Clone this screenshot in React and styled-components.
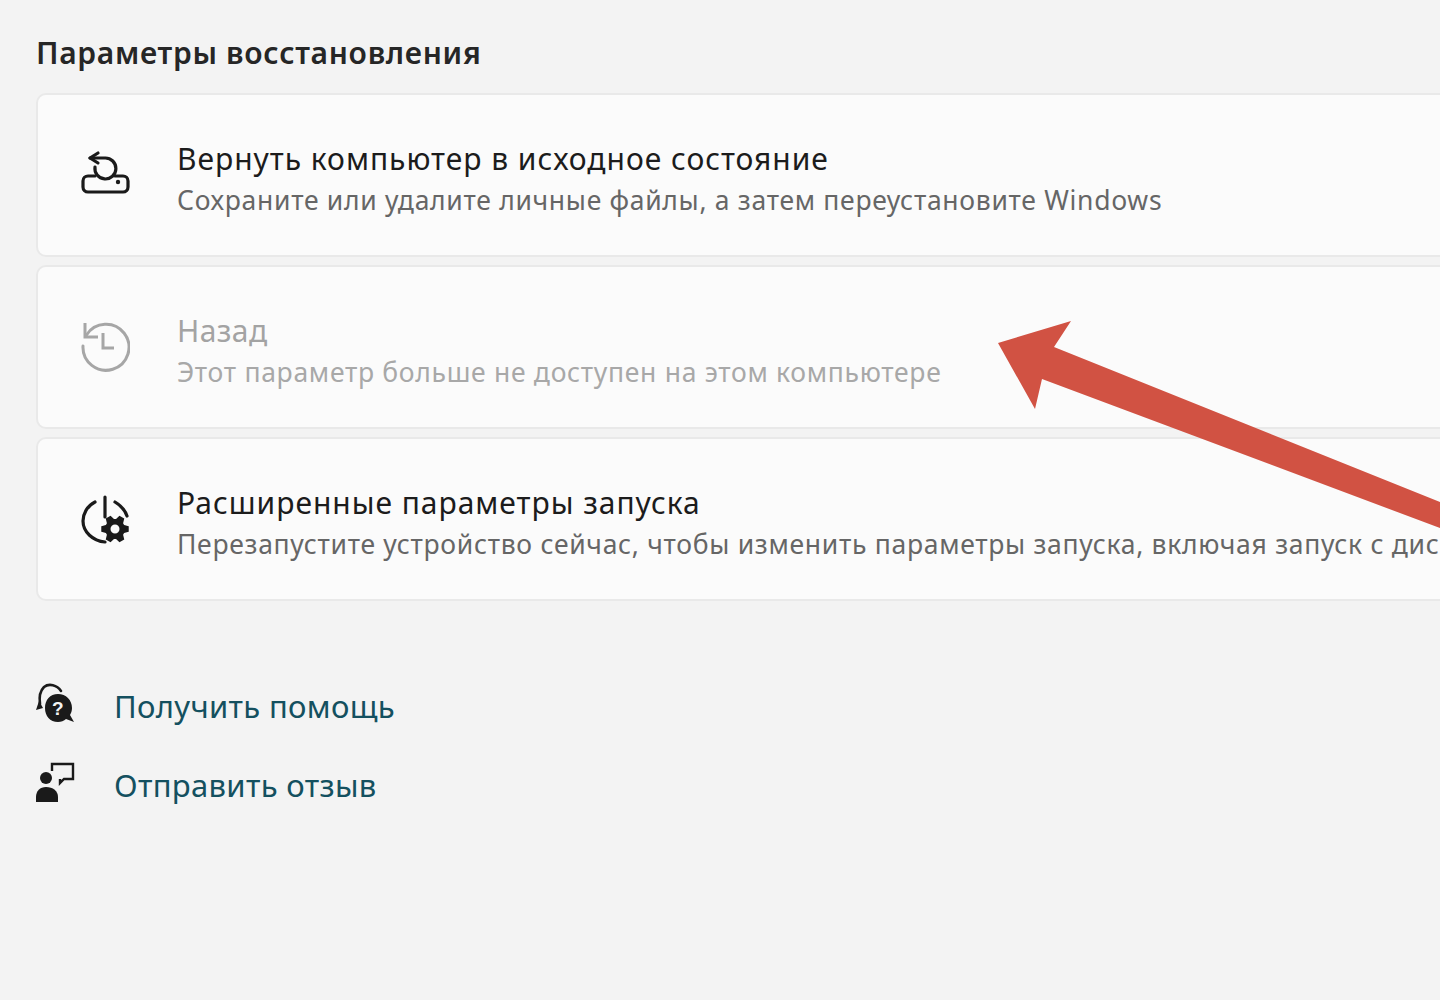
import React from 'react'
import styled, { createGlobalStyle } from 'styled-components'

const GlobalStyle = createGlobalStyle`
  html, body {
    margin: 0;
    padding: 0;
    background: #f3f3f3;
    overflow: hidden;
  }
`

const Page = styled.div`
  position: relative;
  width: 1440px;
  height: 1000px;
  overflow: hidden;
  box-sizing: border-box;
  padding: 32px 0 0 36px;
  background: #f3f3f3;
  font-family: 'Noto Sans', 'Open Sans', sans-serif;
`

const SectionTitle = styled.h2`
  margin: 0 0 19px;
  height: 42px;
  line-height: 42px;
  font-size: 30px;
  font-weight: 600;
  letter-spacing: 0.7px;
  color: #262626;
`

const CardList = styled.div`
  display: flex;
  flex-direction: column;
  gap: 8px;
  width: 1500px;
`

const Card = styled.div`
  display: flex;
  align-items: center;
  height: 164px;
  box-sizing: border-box;
  padding-left: 36px;
  background: #fbfbfb;
  border: 2px solid #e9e9e9;
  border-radius: 10px;
`

const IconSlot = styled.div`
  flex: none;
  width: 56px;
  height: 56px;
  margin-right: 47px;
  color: ${props => (props.$disabled ? '#a6a6a6' : '#1a1a1a')};

  svg {
    display: block;
  }
`

const CardText = styled.div`
  display: flex;
  flex-direction: column;
  gap: 2px;
  padding-top: 8px;
  white-space: nowrap;
`

const CardTitle = styled.div`
  font-size: 30px;
  line-height: 40px;
  letter-spacing: ${props => (props.$disabled ? '0.4px' : '0.97px')};
  color: ${props => (props.$disabled ? '#a3a3a3' : '#1c1c1c')};
`

const CardSub = styled.div`
  font-size: 26.5px;
  line-height: 38px;
  letter-spacing: 0.7px;
  color: ${props => (props.$disabled ? '#a8a8a8' : '#666666')};
`

const Links = styled.div`
  display: flex;
  flex-direction: column;
  gap: 31px;
  margin-top: 81px;
`

const LinkRow = styled.a`
  display: flex;
  align-items: center;
  height: 48px;
  color: #14505f;
  font-size: 31px;
  letter-spacing: 0.33px;
  text-decoration: none;
`

const LinkIcon = styled.span`
  flex: none;
  width: 40px;
  height: 48px;
  margin-right: 38px;
  color: #1a1a1a;

  svg {
    display: block;
  }
`

const Arrow = styled.svg`
  position: absolute;
  left: 0;
  top: 0;
  pointer-events: none;
`

// six toothed gear, teeth on the horizontal axis
const gearPath = (cx, cy, outer, inner, hole) => {
  const pts = []
  for (let i = 0; i < 6; i++) {
    const a = (i * 60 * Math.PI) / 180
    const spread = [[-0.42, inner], [-0.2, outer], [0.2, outer], [0.42, inner]]
    spread.forEach(([d, r]) => {
      pts.push(`${(cx + r * Math.cos(a + d)).toFixed(2)} ${(cy + r * Math.sin(a + d)).toFixed(2)}`)
    })
  }
  return `M${pts.join(' L')} Z M${cx - hole} ${cy} a${hole} ${hole} 0 1 0 ${hole * 2} 0 a${hole} ${hole} 0 1 0 ${-hole * 2} 0 Z`
}

const ResetIcon = () => (
  <svg width="56" height="56" viewBox="0 0 56 56" fill="none" stroke="currentColor" strokeWidth="3.2" strokeLinecap="round" strokeLinejoin="round">
    <path d="M24 6 L16 11 L24 16" />
    <path d="M16 11 H31 A10.5 10.5 0 1 1 21 20" />
    <path d="M21 29 H14 A5 5 0 0 0 9 34 V40 A5 5 0 0 0 14 45 H49 A5 5 0 0 0 54 40 V34 A5 5 0 0 0 49 29 H41" />
    <circle cx="44" cy="35" r="2.2" fill="currentColor" stroke="none" />
  </svg>
)

const HistoryIcon = () => (
  <svg width="56" height="56" viewBox="0 0 56 56" fill="none" stroke="currentColor" strokeWidth="3">
    <path d="M11 4 V18 H24" />
    <path d="M12.5 16 A23 23 0 1 1 9 27" strokeLinecap="round" />
    <path d="M29 14 V29 H40" />
  </svg>
)

const StartupIcon = () => (
  <svg width="56" height="56" viewBox="0 0 56 56" fill="none" stroke="currentColor" strokeWidth="3.2" strokeLinecap="round">
    <path d="M31 6 V26" />
    <path d="M21 11 C13 15 9 23 9 30 C9 41 19 50 31 51" />
    <path d="M41 11 C46 14 51 19 53 25" />
    <path fillRule="evenodd" fill="currentColor" stroke="none" d={gearPath(41, 38, 14, 10, 4.5)} />
  </svg>
)

const HelpIcon = () => (
  <svg width="40" height="48" viewBox="0 0 40 48" fill="none">
    <path d="M25 9 C21 3 13 1 8 5 C4 9 3 15 4 22" stroke="currentColor" strokeWidth="2.6" strokeLinecap="round" />
    <path d="M0 28 L3 19 L7 26 Z" fill="currentColor" />
    <path d="M22 12 C30 12 36 18 36 26 C36 29 35 31 34 33 L38 40 L30 37 C28 39 25 40 22 40 C14 40 9 34 9 26 C9 18 14 12 22 12 Z" fill="currentColor" />
    <text x="22" y="33" textAnchor="middle" fontSize="19" fontWeight="700" fontFamily="'Liberation Sans', sans-serif" fill="#f3f3f3">?</text>
  </svg>
)

const FeedbackIcon = () => (
  <svg width="40" height="48" viewBox="0 0 40 48" fill="none">
    <circle cx="10" cy="17" r="6" fill="currentColor" />
    <path d="M0 41 V36 C0 30 4 26 10 26 C17 26 22 30 22 36 V41 Z" fill="currentColor" />
    <path d="M16 10 V3 H37 V18 H28 L24 22 V18" stroke="currentColor" strokeWidth="2.4" />
  </svg>
)

const App = () => {
  return (
    <Page>
      <GlobalStyle />
      <SectionTitle>Параметры восстановления</SectionTitle>
      <CardList>
        <Card>
          <IconSlot><ResetIcon /></IconSlot>
          <CardText>
            <CardTitle>Вернуть компьютер в исходное состояние</CardTitle>
            <CardSub>Сохраните или удалите личные файлы, а затем переустановите Windows</CardSub>
          </CardText>
        </Card>
        <Card>
          <IconSlot $disabled><HistoryIcon /></IconSlot>
          <CardText>
            <CardTitle $disabled>Назад</CardTitle>
            <CardSub $disabled>Этот параметр больше не доступен на этом компьютере</CardSub>
          </CardText>
        </Card>
        <Card>
          <IconSlot><StartupIcon /></IconSlot>
          <CardText>
            <CardTitle>Расширенные параметры запуска</CardTitle>
            <CardSub>Перезапустите устройство сейчас, чтобы изменить параметры запуска, включая запуск с диска</CardSub>
          </CardText>
        </Card>
      </CardList>
      <Links>
        <LinkRow href="#">
          <LinkIcon><HelpIcon /></LinkIcon>
          Получить помощь
        </LinkRow>
        <LinkRow href="#">
          <LinkIcon><FeedbackIcon /></LinkIcon>
          Отправить отзыв
        </LinkRow>
      </Links>
      <Arrow width="1440" height="1000" viewBox="0 0 1440 1000">
        <path fill="#d15243" d="M998 343 L1071 321 L1054 347 L1440 502 L1440 528 L1042 379 L1035 409 Z" />
      </Arrow>
    </Page>
  )
}

export default App
